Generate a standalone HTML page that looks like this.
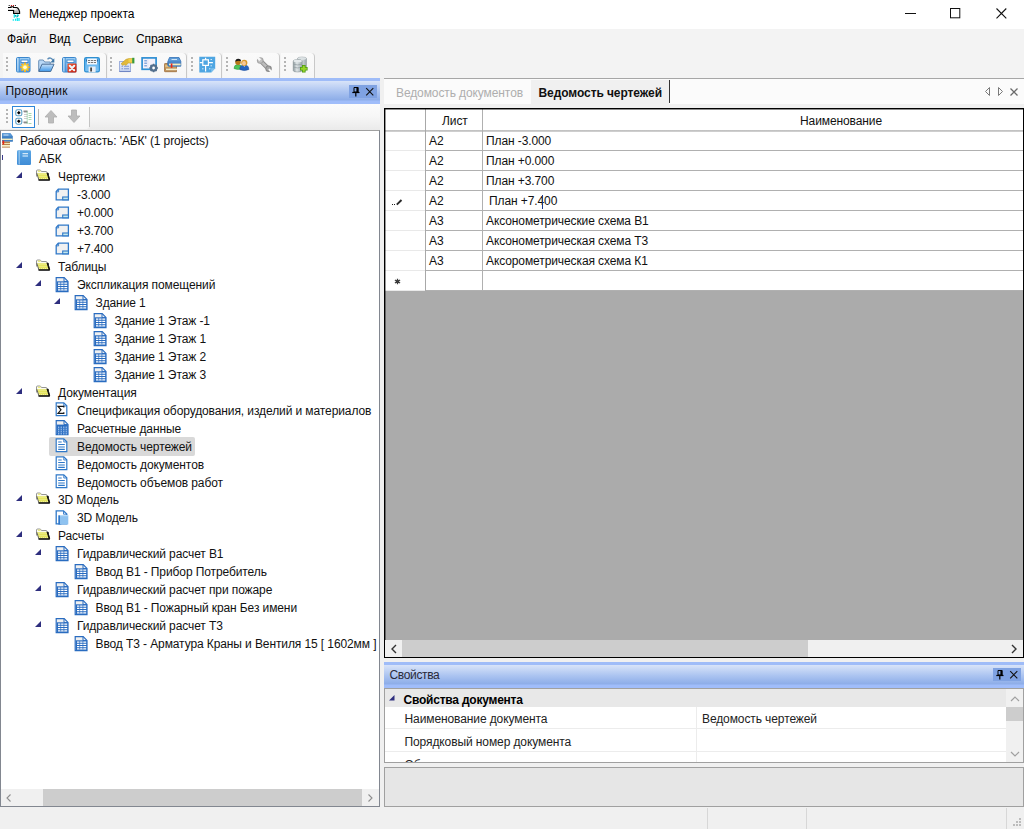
<!DOCTYPE html>
<html lang="ru">
<head>
<meta charset="utf-8">
<title>Менеджер проекта</title>
<style>
html,body{margin:0;padding:0;}
body{width:1024px;height:829px;position:relative;overflow:hidden;background:#f0f0f0;
 font-family:"Liberation Sans",sans-serif;font-size:12px;color:#000;letter-spacing:-0.1px;}
div,svg{position:absolute;box-sizing:border-box;}
.t{white-space:nowrap;line-height:18px;}
.tl{white-space:nowrap;line-height:18px;height:18px;color:#111;}
.sel{height:19px;background:#d9d9d9;border-radius:2px;}
#title{left:0;top:0;width:1024px;height:29px;background:#fff;}
#menubar{left:0;top:29px;width:1024px;height:22px;background:#f3f3f3;}
#toolbar{left:0;top:51px;width:1024px;height:27px;background:#f3f3f3;}
.hdr{background:linear-gradient(#9fbcf8 0,#9fbcf8 2.500px,#d6e2f8 3.500px,#a9c2f0 55%,#8dade8 22px,#a0bdfa 23px,#a0bdfa 100%);}
.grip{width:2px;height:14px;background:repeating-linear-gradient(#b4b4b4 0,#b4b4b4 2px,transparent 2px,transparent 4px);}
.strip{top:2px;height:25px;background:linear-gradient(#fafafa,#f6f6f6);border-right:1px solid #c8c8c8;border-radius:0 4px 0 0;}
.vsep{width:1px;background:#c4c4c4;}
.hl{height:1px;background:#a0a0a0;left:0;}
.vl{width:1px;background:#a0a0a0;top:0;}
.cell{white-space:nowrap;line-height:20px;height:20px;color:#111;}
</style>
</head>
<body>
<svg width="0" height="0" style="left:0;top:0;overflow:hidden">
<defs>
<linearGradient id="gbk2" x1="0" y1="0" x2="0" y2="1"><stop offset="0" stop-color="#5aa6e4"/><stop offset="1" stop-color="#3f8cd6"/></linearGradient>
<g id="i-ws"><path d="M1 1.200h8.500l2.300 3v5.300h-10.800z" fill="#3f80c4"/><path d="M1.200 1.500h8l2 2.800h-10z" fill="#5a9ad8"/><rect x="2.500" y="2.500" width="5" height="1" fill="#cfe2f4"/><rect x="1" y="6.600" width="10.500" height="1.500" fill="#f4eec0"/><rect x="1" y="8.200" width="10.800" height="1.300" fill="#3f80c4"/>
<rect x="1" y="9.600" width="8" height="6" fill="#b8824a"/><rect x="1" y="11" width="8" height="1" fill="#f0e2b0"/><rect x="1" y="13" width="8" height="1.700" fill="#f6f0cc"/><rect x="1.500" y="8.500" width="1.700" height="4" fill="#e8261c"/></g>
<g id="i-book"><rect x="0" y=".3" width="14" height="14.700" rx="1.200" fill="url(#gbk2)"/><path d="M2.200 .8v13.800" stroke="#cfe6f8" stroke-width=".7"/><rect x="5.500" y="3.200" width="5.500" height="1" fill="#f4fafe"/><rect x="5.500" y="5" width="5.500" height="2" fill="#9ccaf0"/></g>
<g id="i-folder"><path d="M1.500 9.500v-5.500q0-1 1-1h2.300q.8 0 1.200.8l.5.700h4.500q.8 0 .8.800v1.200" fill="#fbfbee" stroke="#8a8a8a" stroke-width=".9"/><path d="M3 4.200h2.500" stroke="#e6e66a" stroke-width="1.200"/><path d="M2 6.300h10.500l2 6.200h-10.800z" fill="#e4e45e"/><path d="M2.500 7.500h9M3.500 9.500h9M4 11.500h9" stroke="#f4f4b0" stroke-width=".8" stroke-dasharray="1 1"/><path d="M1.800 6.300l2 6.400" stroke="#555" stroke-width=".9" fill="none"/><path d="M3.500 13h11.300M12.300 5.800l2.200 7" stroke="#000" stroke-width="1.500" fill="none"/><path d="M12.200 6l1.400 0 .9 6.500z" fill="#222"/></g>
<g id="i-sheet"><path d="M3.300 1.200h10.100v10.600h-12.200v-8.200z" fill="#f1f1f1" stroke="#2f78c8" stroke-width="1.300"/><path d="M3.600 1.500v2.400h-2.300" fill="none" stroke="#2f78c8" stroke-width=".9"/><rect x="7.700" y="9" width="5.700" height="2.800" fill="#c4e8ec" stroke="#2f78c8" stroke-width="1.100"/></g>
<g id="i-table"><path d="M1.200 .6h8l3.800 3.800v10.200h-11.800z" fill="#f0f0f0" stroke="#2a6cc0" stroke-width="1.200"/><path d="M9 .8v3.800h3.800" fill="none" stroke="#2a6cc0" stroke-width="1"/><rect x="1.800" y="4.300" width="11.200" height="10.300" fill="#2a6cc0"/><path d="M3 6h9.200M3 8.300h9.200M3 10.600h9.200M3 12.900h9.200" stroke="#fff" stroke-width="1.250"/><path d="M5.700 5v8.500M8.900 5v8.500" stroke="#2a6cc0" stroke-width=".7"/></g>
<g id="i-sigma"><path d="M1.200 .8h7.600l3 3v9.800h-10.600z" fill="#fff" stroke="#2f78c8" stroke-width="1.200"/><path d="M8.800 1v3h3" fill="none" stroke="#2f78c8" stroke-width=".9"/><path d="M8.800 5.500v-1.200h-5.800l3 3.500-3 3.600h5.800v-1.200" fill="none" stroke="#1a1a1a" stroke-width="1.200"/></g>
<g id="i-calc"><path d="M1.200 .6h8l3.800 3.800v10.200h-11.800z" fill="#f0f0f0" stroke="#2a6cc0" stroke-width="1.200"/><path d="M9 .8v3.800h3.800" fill="none" stroke="#2a6cc0" stroke-width="1"/><rect x="1.800" y="4.600" width="11" height="10" fill="#2a6cc0"/><path d="M3.700 6.500v8M6.200 6.500v8M8.800 6.500v8M11.200 6.500v8" stroke="#a4c6ee" stroke-width="1.100"/><path d="M2 8.500h10.500M2 10.500h10.500M2 12.500h10.500" stroke="#3a78c8" stroke-width=".7"/></g>
<g id="i-doc"><path d="M1.200 .8h7.600l3 3v9.800h-10.600z" fill="#fff" stroke="#2f78c8" stroke-width="1.200"/><path d="M8.800 1v3h3" fill="none" stroke="#2f78c8" stroke-width=".9"/><path d="M3.200 4h3.500M3.200 6.500h6.600M3.200 9h6.600M3.200 11.400h6.600" stroke="#2f78c8" stroke-width="1.200"/></g>
<g id="i-model"><path d="M1.200 .8h7.300l3.300 3.300v9.700h-10.600z" fill="#fff" stroke="#2f78c8" stroke-width="1.300"/><path d="M8.500 1v3.200h3.200" fill="none" stroke="#2f78c8" stroke-width=".9"/><rect x="3.300" y="5.300" width="3" height="9.300" fill="#2f78cc"/><rect x="5" y="5.600" width="8.300" height="8.800" fill="#8ec2f0"/><path d="M5 5.600h8.300" stroke="#b8daf6" stroke-width="1.200"/></g>
<g id="i-pin"><path d="M2 .5h4.200v4.500h-4.200z" fill="none" stroke="#000" stroke-width="1"/><path d="M5.200 .5v4.500" stroke="#000" stroke-width="1.600"/><path d="M.3 5.500h7.200" stroke="#000" stroke-width="1.200"/><path d="M3.800 6v3.500" stroke="#000" stroke-width="1.200"/></g>
</defs>
</svg>

<!-- title bar -->
<div id="title">
 <svg style="left:7px;top:4px" width="16" height="18" viewBox="7 4 16 18"><defs><linearGradient id="gtap" x1="0" y1="0" x2="0" y2="1"><stop offset="0" stop-color="#fff"/><stop offset="1" stop-color="#9a9a9a"/></linearGradient></defs>
 <path d="M8 7.500h3v-.8h2.500v.8h3.300q1.300 .5 2 2l.8 2v2h-6v-3h-5.600z" fill="url(#gtap)"/><path d="M8 7.500h3v-.8h2.500v.8h3.300q1.300 .5 2 2l.8 2v2h-6v-3h-5.600" fill="none" stroke="#000" stroke-width="1.100"/>
 <path d="M8.500 8.700h5.500l1.500 1" stroke="#fff" stroke-width="1.300" fill="none"/>
 <rect x="8.700" y="5" width="1" height="1" fill="#111"/><rect x="14.900" y="5" width="1" height="1" fill="#111"/><rect x="10.900" y="5" width="1.100" height="1.100" fill="#c01010"/><rect x="12.900" y="5" width="1.100" height="1.100" fill="#c01010"/>
 <path d="M14.300 14.200v3.500M17.800 14.200v2.500M16 15v1.500M19 18v3M13.300 19.200v1.600M15.500 18.800v2M17.300 18v3" stroke="#00e8f0" stroke-width="1.200"/>
 <path d="M15.200 15l1 2M18.300 15l-1.400 2.500" stroke="#0a9aa0" stroke-width=".9"/></svg>
 <div class="t" style="left:29px;top:5px;letter-spacing:0">Менеджер проекта</div>
 <svg style="left:904px;top:8px" width="14" height="12" viewBox="0 0 14 12"><path d="M1 5.500h11" stroke="#111" stroke-width="1"/></svg>
 <svg style="left:949px;top:7px" width="14" height="14" viewBox="0 0 14 14"><rect x="1.500" y="1.500" width="9.300" height="9.300" fill="none" stroke="#111" stroke-width="1"/></svg>
 <svg style="left:995px;top:6.600px" width="14" height="14" viewBox="0 0 14 14"><path d="M1.500 1.500l9.800 9.800M11.300 1.500l-9.800 9.800" stroke="#111" stroke-width="1.100"/></svg>
</div>

<!-- menu bar -->
<div id="menubar">
 <div class="t" style="left:7px;top:1px">Файл</div>
 <div class="t" style="left:49px;top:1px">Вид</div>
 <div class="t" style="left:83px;top:1px">Сервис</div>
 <div class="t" style="left:136px;top:1px">Справка</div>
</div>

<!-- toolbar -->
<div id="toolbar">
<div class="strip" style="left:3px;width:104px"></div>
<div class="strip" style="left:108px;width:79px"></div>
<div class="strip" style="left:188px;width:34px"></div>
<div class="strip" style="left:223px;width:57px"></div>
<div class="strip" style="left:281px;width:34px"></div>
<div class="grip" style="left:6px;top:6px"></div>
<div class="grip" style="left:110px;top:6px"></div>
<div class="grip" style="left:191px;top:6px"></div>
<div class="grip" style="left:226px;top:6px"></div>
<div class="grip" style="left:284px;top:6px"></div>
<!-- 1 new project -->
<svg style="left:16px;top:5px" width="16" height="17" viewBox="0 0 16 17">
 <defs><linearGradient id="gbk" x1="0" y1="0" x2="0" y2="1"><stop offset="0" stop-color="#9fd0f6"/><stop offset="1" stop-color="#4f9de6"/></linearGradient>
 <radialGradient id="gst"><stop offset="0" stop-color="#fffbd0"/><stop offset=".45" stop-color="#ffe23a"/><stop offset="1" stop-color="#f59a10"/></radialGradient></defs>
 <rect x=".5" y="1.500" width="13.500" height="14.500" rx="1.200" fill="url(#gbk)" stroke="#3a86cc"/>
 <path d="M2 2v13.500" stroke="#d8ecfb" stroke-width="1"/><path d="M3.200 2v13.500" stroke="#3a86cc" stroke-width=".8"/>
 <rect x="5" y="4" width="7" height="2.600" fill="#fff" stroke="#3a86cc" stroke-width=".9"/>
 <path d="M9 6.500v9.600M4.200 11.300h9.600M5.600 7.900l6.800 6.800M12.400 7.900l-6.800 6.800" stroke="url(#gst)" stroke-width="1.900"/>
 <circle cx="9" cy="11.300" r="1.700" fill="#fffbe0"/>
</svg>
<!-- 2 open -->
<svg style="left:38px;top:5px" width="17" height="17" viewBox="0 0 17 17">
 <defs><linearGradient id="gfo" x1="0" y1="0" x2="0" y2="1"><stop offset="0" stop-color="#c8e2fa"/><stop offset="1" stop-color="#3f97e8"/></linearGradient></defs>
 <path d="M.7 15.200v-10.200q0-1 1-1h3.500l1.500 2h5.500v2" fill="#b9d8f6" stroke="#6a8fb5" stroke-width="1"/>
 <path d="M.8 15.500l3.200-7.300h12l-3.300 7.300z" fill="url(#gfo)" stroke="#4a6f98" stroke-width="1"/>
 <path d="M9.500 3.200q3.200-2.800 5.500 1.200" fill="none" stroke="#5d8db8" stroke-width="1.400"/><path d="M16.300 2.200v4.200h-4z" fill="#3f78a8"/>
</svg>
<!-- 3 delete project -->
<svg style="left:62px;top:5px" width="16" height="17" viewBox="0 0 16 17">
 <defs><linearGradient id="grd" x1="0" y1="0" x2="1" y2="1"><stop offset="0" stop-color="#f2603a"/><stop offset="1" stop-color="#c0180c"/></linearGradient></defs>
 <rect x=".5" y="1.500" width="13.500" height="14.500" rx="1.200" fill="url(#gbk)" stroke="#3a86cc"/>
 <path d="M2 2v13.500" stroke="#d8ecfb" stroke-width="1"/><path d="M3.200 2v13.500" stroke="#3a86cc" stroke-width=".8"/>
 <rect x="5" y="4" width="7" height="2.600" fill="#fff" stroke="#3a86cc" stroke-width=".9"/>
 <rect x="5.500" y="7.500" width="9" height="9" rx="1" fill="url(#grd)"/>
 <path d="M7.800 9.800l4.400 4.400M12.200 9.800l-4.400 4.400" stroke="#eef6fa" stroke-width="2.100" stroke-linecap="round"/>
</svg>
<!-- 4 save -->
<svg style="left:84px;top:5px" width="17" height="17" viewBox="0 0 17 17">
 <defs><linearGradient id="gsv" x1="0" y1="0" x2="0" y2="1"><stop offset="0" stop-color="#5ab0ee"/><stop offset="1" stop-color="#7cc2f4"/></linearGradient></defs>
 <rect x=".6" y="1.600" width="14.800" height="14.300" rx="1.600" fill="url(#gsv)" stroke="#2f8fd0" stroke-width="1.200"/>
 <rect x="3" y="2.600" width="10" height="6" rx=".6" fill="#f4f8fc"/>
 <path d="M4 4.500h8M4 6.500h8" stroke="#6a6a6a" stroke-width=".9" stroke-dasharray="2.200 .7"/>
 <path d="M2.600 3.500v2M13.400 3.500v2" stroke="#1f5f9a" stroke-width=".9"/>
 <rect x="4.600" y="10.500" width="7" height="5.800" fill="#e9eef4"/><rect x="6.300" y="11.500" width="1.600" height="4" fill="#333"/>
</svg>
<!-- 5 properties (hand) -->
<svg style="left:118px;top:5px" width="18" height="17" viewBox="0 0 18 17">
 <defs><linearGradient id="gpd" x1="0" y1="0" x2="0" y2="1"><stop offset="0" stop-color="#eef2fb"/><stop offset="1" stop-color="#c4d2f0"/></linearGradient></defs>
 <rect x="1.500" y="5.500" width="11" height="10" fill="url(#gpd)" stroke="#9fb0dc" stroke-width="1"/>
 <path d="M1.500 15.500h11" stroke="#6f86c4" stroke-width="1.100"/>
 <path d="M3.500 10.200h1.500M6 10.200h5M3.500 12.700h1.500M6 12.700h5" stroke="#7f98d4" stroke-width="1.100"/>
 <path d="M3 7.800l5-4.500 3-.8h3.300v4.600h-4l-2.500 2.300-1.500-1-1.500 1z" fill="#e2b93a" stroke="#b8962a" stroke-width=".5"/>
 <path d="M10.500 2.600h3.800v3.800h-3.800z" fill="#f0cf4c"/>
 <rect x="14.200" y="1.800" width="2.200" height="5.600" fill="#3a9a3a"/>
</svg>
<!-- 6 window gear -->
<svg style="left:141px;top:5px" width="17" height="17" viewBox="0 0 17 17">
 <rect x="1.100" y="1.900" width="14" height="11.400" fill="#f4f2fb" stroke="#2f8fd4" stroke-width="1.700"/>
 <path d="M3.300 4.800h2.600M3.300 7.300h2.600M3.300 9.800h2.600" stroke="#86a8dc" stroke-width="1.400"/>
 <path d="M6.800 3v9" stroke="#dcdff2" stroke-width=".8"/>
 <g transform="translate(12.600 12)"><circle r="2.800" fill="none" stroke="#54708e" stroke-width="2"/><path d="M0-4.300v8.600M-4.300 0h8.600M-3-3l6 6M3-3l-6 6" stroke="#54708e" stroke-width="1.400"/><circle r="1.400" fill="#fff"/></g>
</svg>
<!-- 7 books -->
<svg style="left:164px;top:5px" width="18" height="17" viewBox="0 0 18 17">
 <path d="M1.200 7.500q-.8 0-.8.800v6.600q0 .8.800.8h11.300v-1.500h-10.500v-1.700h10.500v-5z" fill="#c89a5a" stroke="#9a6a3a" stroke-width=".8"/>
 <rect x="2" y="12.500" width="10.500" height="1.700" fill="#f6efc8"/>
 <rect x="1.200" y="9.500" width="11" height="1" fill="#f0e2b0"/>
 <path d="M5.500 1.500h9.500l1.800 4v4.700h-11.800q-1.200 0-1.200-1.200v-3.200z" fill="#4a86c8" stroke="#2f6cb0" stroke-width=".8"/>
 <path d="M5.800 1.800h9l1.500 3.500h-12z" fill="#5c9ad6"/>
 <rect x="5" y="7.600" width="11.600" height="1.700" fill="#f4eebc"/>
 <rect x="7.500" y="3" width="5.500" height=".9" fill="#dcebf8"/>
 <rect x="6.800" y="7.500" width="1.600" height="4.300" fill="#e8261c"/>
</svg>
<!-- 8 blueprint -->
<svg style="left:199px;top:5px" width="17" height="17" viewBox="0 0 17 17">
 <path d="M.3.800h15.900v11.500l-4 4.200h-11.900z" fill="#4fa6e2"/>
 <path d="M12.200 16.500v-4.200h4z" fill="#7fc0ec"/>
 <rect x="3.800" y="3.800" width="5.600" height="5.600" fill="none" stroke="#fff" stroke-width="1.200"/>
 <path d="M6.600 1.800v2M6.600 9.400v6M.8 6.600h3M9.400 6.600h4.500" stroke="#fff" stroke-width="1.200"/>
 <path d="M11.500 3.500h1.500M11.500 9.800h1.500M3 12.800h1.500M10 12.800h1.500" stroke="#cfe8f8" stroke-width="1"/>
</svg>
<!-- 9 users -->
<svg style="left:233px;top:5px" width="17" height="17" viewBox="0 0 17 17">
 <path d="M1 12.500q0-4 4-4t4 4q-4 1.800-8 0z" fill="#4fc45a" stroke="#2f9a3f" stroke-width=".6"/>
 <circle cx="5" cy="6.300" r="2.700" fill="#b87818"/><path d="M2.200 5.800q.3-3 3-3t2.800 2.400q-2.800-1-5.800.6z" fill="#1a1a1a"/>
 <path d="M6.800 13.500q0-4.600 4.500-4.600t4.500 4.600q-4.500 2-9 0z" fill="#2464c0" stroke="#184a98" stroke-width=".6"/>
 <path d="M10.500 9.500l.8 1.500.8-1.500z" fill="#fff"/>
 <circle cx="11.300" cy="6.800" r="3.100" fill="#d89a2a"/><ellipse cx="11" cy="7.300" rx="1.900" ry="2.200" fill="#f6c89a"/>
</svg>
<!-- 10 wrench -->
<svg style="left:256px;top:5px" width="17" height="17" viewBox="0 0 17 17">
 <path d="M4.500 4.800l7.800 7.800" stroke="#8e8e8e" stroke-width="4.400" stroke-linecap="round"/>
 <path d="M4.500 4.800l7.800 7.800" stroke="#bdbdbd" stroke-width="2.400" stroke-linecap="round"/>
 <circle cx="4.200" cy="4.500" r="3.300" fill="#a6a6a6"/><circle cx="4.200" cy="4.500" r="2.200" fill="#c2c2c2"/><path d="M.8 .8l3.400 3.400" stroke="#f8f8f8" stroke-width="2.400"/>
 <circle cx="12.600" cy="12.800" r="3.200" fill="#8c8c8c"/><circle cx="12.400" cy="12.600" r="2" fill="#a8a8a8"/><path d="M16.200 16.400l-3.300-3.300" stroke="#f8f8f8" stroke-width="2"/>
</svg>
<!-- 11 db add -->
<svg style="left:292px;top:5px" width="18" height="18" viewBox="0 0 18 18">
 <defs><linearGradient id="gdb" x1="0" y1="0" x2="1" y2="0"><stop offset="0" stop-color="#8c989c"/><stop offset=".4" stop-color="#dfe5e7"/><stop offset="1" stop-color="#9aa6aa"/></linearGradient></defs>
 <path d="M5.500 2.500q0-1.500 4.500-1.500t4.500 1.500v9.500q0 1.500-4.500 1.500t-4.500-1.500z" fill="url(#gdb)" stroke="#8a9498" stroke-width=".5"/>
 <ellipse cx="10" cy="2.500" rx="4.300" ry="1.300" fill="#dce2e4"/>
 <path d="M1.200 5q0-1.500 4.500-1.500t4.500 1.500v9.500q0 1.500-4.500 1.500t-4.500-1.500z" fill="url(#gdb)" stroke="#808c90" stroke-width=".5"/>
 <ellipse cx="5.700" cy="5" rx="4.300" ry="1.300" fill="#e4e9eb"/>
 <path d="M1.400 8.200q4.300 1.500 8.600 0M1.400 11.200q4.300 1.500 8.600 0" fill="none" stroke="#8e9a9e" stroke-width=".7"/>
 <path d="M11.800 9v7.600M8 12.800h7.600" stroke="#4a9a12" stroke-width="3.600"/>
 <path d="M11.800 9.800v6M8.800 12.800h6" stroke="#9ad42a" stroke-width="2"/>
</svg>

</div>

<!-- left panel -->
<div class="hdr" style="left:0;top:78px;width:380px;height:26px;"></div>
<div class="t" style="left:5.500px;top:82px;color:#111;letter-spacing:.22px">Проводник</div>
<div style="left:349px;top:85px;width:28px;height:13px;background:#7fa2e2;"></div>
<svg style="left:352px;top:87px" width="8" height="10" viewBox="0 0 8 10"><use href="#i-pin"/></svg>
<svg style="left:365px;top:87px" width="10" height="10" viewBox="0 0 10 10"><path d="M1.200 1.200l7.100 7.100M8.300 1.200l-7.100 7.100" stroke="#111" stroke-width="1.100"/></svg>

<div style="left:0;top:104px;width:380px;height:26px;background:linear-gradient(#fcfcfc,#f6f6f6 50%,#eaeaea);"></div><div style="left:0;top:104px;width:89px;height:25px;background:linear-gradient(#fdfdfd,#f7f7f7);border-radius:0 0 3px 0"></div><div style="left:89px;top:107px;width:1px;height:20px;background:#c4c4c4"></div>
<div class="grip" style="left:6px;top:109px;height:16px"></div>
<div style="left:12px;top:106px;width:23px;height:22px;background:#fff;border:1px solid #2e86d8;"></div>
<svg style="left:15px;top:109px" width="18" height="17" viewBox="0 0 18 17">
 <rect x=".8" y=".8" width="6" height="6" rx="1.600" fill="#fff" stroke="#5aa0c8" stroke-width="1.100"/>
 <rect x=".8" y="9.200" width="6" height="6" rx="1.600" fill="#fff" stroke="#5aa0c8" stroke-width="1.100"/>
 <path d="M3.800 2.300v3M2.300 3.800h3M3.800 10.700v3M2.300 12.200h3" stroke="#000" stroke-width="1.500"/>
 <rect x="8.500" y="1.500" width="4" height="1.600" fill="#8a8a8a"/>
 <rect x="8.500" y="12.500" width="4" height="1.600" fill="#8a8a8a"/>
 <path d="M9 3.500h3.500M9 5.500h3.500M9 7.500h3.500M9 9.500h3.500M9 14.500h3.500" stroke="#cfcfcf" stroke-width="1"/>
 <path d="M13.500 4.500h3M13.500 6.500h3M13.500 8.500h3M13.500 10.500h3M13.500 14.500h3" stroke="#a8d8b0" stroke-width="1"/>
 <path d="M12.200 2v13" stroke="#6ac080" stroke-width=".5"/>
</svg>

<div class="vsep" style="left:38px;top:109px;height:16px;background:#b8b8b8"></div>
<svg style="left:43px;top:108.500px" width="16" height="16" viewBox="0 0 16 16"><path d="M8 1.500l6 6.500h-3.500v6h-5v-6h-3.500z" fill="#bdbdbd" stroke="#adadad" stroke-width=".8"/></svg>
<svg style="left:66px;top:108px" width="16" height="16" viewBox="0 0 16 16"><path d="M8 14.500l6-6.500h-3.500v-6h-5v6h-3.500z" fill="#bdbdbd" stroke="#adadad" stroke-width=".8"/></svg>


<div style="left:0;top:130px;width:380px;height:677px;background:#fff;border:1px solid #828790;border-top-color:#a0a0a0;"></div>
<div style="left:0;top:131px;width:2px;height:674px;background:#555;opacity:.0"></div>
<div style="left:2px;top:155px;width:1px;height:5px;background:#3a3a8a"></div>
<svg class="ic" style="left:1px;top:132px" width="16" height="16" viewBox="0 0 16 16"><use href="#i-ws"/></svg>
<div class="tl" style="left:20px;top:132px">Рабочая область: 'АБК' (1 projects)</div>
<svg class="ic" style="left:17px;top:150.3px" width="16" height="16" viewBox="0 0 16 16"><use href="#i-book"/></svg>
<div class="tl" style="left:39px;top:150px">АБК</div>
<svg class="exp" style="left:15.5px;top:172px" width="6" height="6" viewBox="0 0 6 6"><path d="M6 0V6H0Z" fill="#2e2e7e"/></svg>
<svg class="ic" style="left:34.8px;top:167.2px" width="16" height="16" viewBox="0 0 16 16"><use href="#i-folder"/></svg>
<div class="tl" style="left:58px;top:168px">Чертежи</div>
<svg class="ic" style="left:54.5px;top:188px" width="16" height="16" viewBox="0 0 16 16"><use href="#i-sheet"/></svg>
<div class="tl" style="left:77px;top:186px">-3.000</div>
<svg class="ic" style="left:54.5px;top:206px" width="16" height="16" viewBox="0 0 16 16"><use href="#i-sheet"/></svg>
<div class="tl" style="left:77px;top:204px">+0.000</div>
<svg class="ic" style="left:54.5px;top:224px" width="16" height="16" viewBox="0 0 16 16"><use href="#i-sheet"/></svg>
<div class="tl" style="left:77px;top:222px">+3.700</div>
<svg class="ic" style="left:54.5px;top:242px" width="16" height="16" viewBox="0 0 16 16"><use href="#i-sheet"/></svg>
<div class="tl" style="left:77px;top:240px">+7.400</div>
<svg class="exp" style="left:15.5px;top:262px" width="6" height="6" viewBox="0 0 6 6"><path d="M6 0V6H0Z" fill="#2e2e7e"/></svg>
<svg class="ic" style="left:34.8px;top:257.2px" width="16" height="16" viewBox="0 0 16 16"><use href="#i-folder"/></svg>
<div class="tl" style="left:58px;top:258px">Таблицы</div>
<svg class="exp" style="left:35px;top:280px" width="6" height="6" viewBox="0 0 6 6"><path d="M6 0V6H0Z" fill="#2e2e7e"/></svg>
<svg class="ic" style="left:55px;top:277px" width="16" height="16" viewBox="0 0 16 16"><use href="#i-table"/></svg>
<div class="tl" style="left:77px;top:276px">Экспликация помещений</div>
<svg class="exp" style="left:54px;top:298px" width="6" height="6" viewBox="0 0 6 6"><path d="M6 0V6H0Z" fill="#2e2e7e"/></svg>
<svg class="ic" style="left:74px;top:295px" width="16" height="16" viewBox="0 0 16 16"><use href="#i-table"/></svg>
<div class="tl" style="left:95.5px;top:294px">Здание 1</div>
<svg class="ic" style="left:93px;top:313px" width="16" height="16" viewBox="0 0 16 16"><use href="#i-table"/></svg>
<div class="tl" style="left:114.5px;top:312px">Здание 1 Этаж -1</div>
<svg class="ic" style="left:93px;top:331px" width="16" height="16" viewBox="0 0 16 16"><use href="#i-table"/></svg>
<div class="tl" style="left:114.5px;top:330px">Здание 1 Этаж 1</div>
<svg class="ic" style="left:93px;top:349px" width="16" height="16" viewBox="0 0 16 16"><use href="#i-table"/></svg>
<div class="tl" style="left:114.5px;top:348px">Здание 1 Этаж 2</div>
<svg class="ic" style="left:93px;top:367px" width="16" height="16" viewBox="0 0 16 16"><use href="#i-table"/></svg>
<div class="tl" style="left:114.5px;top:366px">Здание 1 Этаж 3</div>
<svg class="exp" style="left:15.5px;top:388px" width="6" height="6" viewBox="0 0 6 6"><path d="M6 0V6H0Z" fill="#2e2e7e"/></svg>
<svg class="ic" style="left:34.8px;top:383.2px" width="16" height="16" viewBox="0 0 16 16"><use href="#i-folder"/></svg>
<div class="tl" style="left:58px;top:384px">Документация</div>
<svg class="ic" style="left:55px;top:402.4px" width="16" height="16" viewBox="0 0 16 16"><use href="#i-sigma"/></svg>
<div class="tl" style="left:77px;top:402px">Спецификация оборудования, изделий и материалов</div>
<svg class="ic" style="left:55px;top:420.3px" width="16" height="16" viewBox="0 0 16 16"><use href="#i-calc"/></svg>
<div class="tl" style="left:77px;top:420px">Расчетные данные</div>
<div class="sel" style="left:49px;top:437px;width:146px"></div>
<svg class="ic" style="left:55px;top:438.1px" width="16" height="16" viewBox="0 0 16 16"><use href="#i-doc"/></svg>
<div class="tl" style="left:77px;top:438px">Ведомость чертежей</div>
<svg class="ic" style="left:55px;top:456.1px" width="16" height="16" viewBox="0 0 16 16"><use href="#i-doc"/></svg>
<div class="tl" style="left:77px;top:456px">Ведомость документов</div>
<svg class="ic" style="left:55px;top:474.1px" width="16" height="16" viewBox="0 0 16 16"><use href="#i-doc"/></svg>
<div class="tl" style="left:77px;top:474px">Ведомость объемов работ</div>
<svg class="exp" style="left:15.5px;top:495px" width="6" height="6" viewBox="0 0 6 6"><path d="M6 0V6H0Z" fill="#2e2e7e"/></svg>
<svg class="ic" style="left:34.8px;top:490.2px" width="16" height="16" viewBox="0 0 16 16"><use href="#i-folder"/></svg>
<div class="tl" style="left:58px;top:491px">3D Модель</div>
<svg class="ic" style="left:55px;top:509.8px" width="16" height="16" viewBox="0 0 16 16"><use href="#i-model"/></svg>
<div class="tl" style="left:77px;top:509px">3D Модель</div>
<svg class="exp" style="left:15.5px;top:531px" width="6" height="6" viewBox="0 0 6 6"><path d="M6 0V6H0Z" fill="#2e2e7e"/></svg>
<svg class="ic" style="left:34.8px;top:526.2px" width="16" height="16" viewBox="0 0 16 16"><use href="#i-folder"/></svg>
<div class="tl" style="left:58px;top:527px">Расчеты</div>
<svg class="exp" style="left:35px;top:549px" width="6" height="6" viewBox="0 0 6 6"><path d="M6 0V6H0Z" fill="#2e2e7e"/></svg>
<svg class="ic" style="left:55px;top:546px" width="16" height="16" viewBox="0 0 16 16"><use href="#i-table"/></svg>
<div class="tl" style="left:77px;top:545px">Гидравлический расчет В1</div>
<svg class="ic" style="left:74px;top:564px" width="16" height="16" viewBox="0 0 16 16"><use href="#i-table"/></svg>
<div class="tl" style="left:95.5px;top:563px">Ввод В1 - Прибор Потребитель</div>
<svg class="exp" style="left:35px;top:585px" width="6" height="6" viewBox="0 0 6 6"><path d="M6 0V6H0Z" fill="#2e2e7e"/></svg>
<svg class="ic" style="left:55px;top:582px" width="16" height="16" viewBox="0 0 16 16"><use href="#i-table"/></svg>
<div class="tl" style="left:77px;top:581px">Гидравлический расчет при пожаре</div>
<svg class="ic" style="left:74px;top:600px" width="16" height="16" viewBox="0 0 16 16"><use href="#i-table"/></svg>
<div class="tl" style="left:95.5px;top:599px">Ввод В1 - Пожарный кран Без имени</div>
<svg class="exp" style="left:35px;top:621px" width="6" height="6" viewBox="0 0 6 6"><path d="M6 0V6H0Z" fill="#2e2e7e"/></svg>
<svg class="ic" style="left:55px;top:618px" width="16" height="16" viewBox="0 0 16 16"><use href="#i-table"/></svg>
<div class="tl" style="left:77px;top:617px">Гидравлический расчет Т3</div>
<svg class="ic" style="left:74px;top:636px" width="16" height="16" viewBox="0 0 16 16"><use href="#i-table"/></svg>
<div class="tl" style="left:95.5px;top:635px">Ввод Т3 - Арматура Краны и Вентиля 15 [ 1602мм ]</div>
<!-- left hscroll -->
<div style="left:1px;top:789px;width:378px;height:17px;background:#f0f0f0;"></div>
<div style="left:43px;top:789px;width:319px;height:17px;background:#cdcdcd;"></div>
<svg style="left:5px;top:793px" width="8" height="10" viewBox="0 0 8 10"><path d="M5.500 1.500l-3.500 3.500 3.500 3.500" fill="none" stroke="#8e8e8e" stroke-width="1.100"/></svg>
<svg style="left:366px;top:793px" width="8" height="10" viewBox="0 0 8 10"><path d="M2.500 1.500l3.500 3.500-3.500 3.500" fill="none" stroke="#8e8e8e" stroke-width="1.100"/></svg>

<!-- right: tab strip -->
<div style="left:384px;top:78px;width:640px;height:1px;background:#a6a6a6;"></div>
<div style="left:384px;top:79px;width:640px;height:25px;background:#fbfbfb;"></div>
<div style="left:384px;top:104px;width:640px;height:4px;background:#f0f0f0;"></div>
<div style="left:531px;top:80px;width:138px;height:25px;background:#f0f0f0;"></div>
<div style="left:669px;top:80px;width:1px;height:23px;background:#333;"></div>
<div class="t" style="left:396px;top:84px;color:#aeaeae">Ведомость документов</div>
<div class="t" style="left:538.5px;top:84px;font-weight:bold;color:#111;letter-spacing:-0.08px">Ведомость чертежей</div>
<svg style="left:984px;top:86px" width="8" height="11" viewBox="0 0 8 11"><path d="M5.500 1.500v8l-4-4z" fill="none" stroke="#7a7a7a" stroke-width="1"/></svg>
<svg style="left:996px;top:86px" width="8" height="11" viewBox="0 0 8 11"><path d="M2.500 1.500v8l4-4z" fill="none" stroke="#7a7a7a" stroke-width="1"/></svg>
<svg style="left:1009px;top:87px" width="10" height="10" viewBox="0 0 10 10"><path d="M1.500 1.500l7 7M8.500 1.500l-7 7" stroke="#6a6a6a" stroke-width="1.300"/></svg>

<!-- grid -->
<div id="grid" style="left:384px;top:108px;width:640px;height:550px;background:#ababab;border:1px solid #000;overflow:hidden">
 <div style="left:0;top:0;width:638px;height:181px;background:#fff;"></div>
 <div class="hl" style="top:21px;width:638px;height:2px;background:linear-gradient(#bdbdbd,#d4d4d4)"></div>
 <div class="hl" style="top:41px;width:40px;background:#e9e9e9"></div><div class="hl" style="top:41px;left:40px;width:598px;background:#b0b0b0"></div>
 <div class="hl" style="top:61px;width:40px;background:#e9e9e9"></div><div class="hl" style="top:61px;left:40px;width:598px;background:#b0b0b0"></div>
 <div class="hl" style="top:81px;width:40px;background:#e9e9e9"></div><div class="hl" style="top:81px;left:40px;width:598px;background:#b0b0b0"></div>
 <div class="hl" style="top:101px;width:40px;background:#e9e9e9"></div><div class="hl" style="top:101px;left:40px;width:598px;background:#b0b0b0"></div>
 <div class="hl" style="top:121px;width:40px;background:#e9e9e9"></div><div class="hl" style="top:121px;left:40px;width:598px;background:#b0b0b0"></div>
 <div class="hl" style="top:141px;width:40px;background:#e9e9e9"></div><div class="hl" style="top:141px;left:40px;width:598px;background:#b0b0b0"></div>
 <div class="hl" style="top:161px;width:40px;background:#e9e9e9"></div><div class="hl" style="top:161px;left:40px;width:598px;background:#b0b0b0"></div>
 <div class="hl" style="top:181px;width:40px;background:#e9e9e9"></div><div class="hl" style="top:181px;left:40px;width:598px;background:#b0b0b0"></div>
 <div class="vl" style="left:40px;height:182px;background:#a8a8a8"></div>
 <div class="vl" style="left:97px;height:182px;background:#b0b0b0"></div>
 <div class="cell" style="left:57px;top:2px">Лист</div>
 <div class="cell" style="left:415px;top:2px">Наименование</div>
 <div class="cell" style="left:44px;top:22px">A2</div><div class="cell" style="left:101px;top:22px">План -3.000</div>
 <div class="cell" style="left:44px;top:42px">A2</div><div class="cell" style="left:101px;top:42px">План +0.000</div>
 <div class="cell" style="left:44px;top:62px">A2</div><div class="cell" style="left:101px;top:62px">План +3.700</div>
 <div class="cell" style="left:44px;top:82px">A2</div><div class="cell" style="left:104px;top:82px">План +7.400</div>
 <div style="left:157px;top:86px;width:1px;height:14px;background:#1a3a8a"></div>
 <div class="cell" style="left:44px;top:102px">A3</div><div class="cell" style="left:101px;top:102px">Аксонометрические схема В1</div>
 <div class="cell" style="left:44px;top:122px">A3</div><div class="cell" style="left:101px;top:122px">Аксонометрическая схема Т3</div>
 <div class="cell" style="left:44px;top:142px">A3</div><div class="cell" style="left:101px;top:142px">Аксорометрическая схема К1</div>
 <svg style="left:6px;top:88px" width="12" height="9" viewBox="0 0 12 9"><rect x="1" y="7" width="1" height="1" fill="#222"/><rect x="3" y="7" width="1" height="1" fill="#222"/><path d="M5.800 7.700l4.700-4.700" stroke="#2a2a2a" stroke-width="1.900"/></svg>
 <svg style="left:9px;top:169px" width="7" height="7" viewBox="0 0 7 7"><circle cx="3.500" cy="3.500" r="1.700" fill="#3a3a3a"/><path d="M3.500 .7v5.600M.9 2l5.200 3M6.100 2l-5.200 3" stroke="#3a3a3a" stroke-width="1.300"/></svg>
 <div style="left:0;top:0;width:1px;height:548px;background:rgba(0,0,0,.4)"></div><div style="left:0;top:0;width:638px;height:1px;background:rgba(0,0,0,.45)"></div>
 <!-- hscroll -->
 <div style="left:0;top:531px;width:638px;height:17px;background:#f0f0f0;"></div>
 <div style="left:17px;top:531px;width:406px;height:17px;background:#cdcdcd;"></div>
 <svg style="left:5px;top:535px" width="8" height="10" viewBox="0 0 8 10"><path d="M6 1l-4 4 4 4" fill="none" stroke="#333" stroke-width="1.400"/></svg>
 <svg style="left:625px;top:535px" width="8" height="10" viewBox="0 0 8 10"><path d="M2 1l4 4-4 4" fill="none" stroke="#333" stroke-width="1.400"/></svg>
</div>

<!-- properties panel -->
<div class="hdr" style="left:384px;top:662px;width:640px;height:26px;"></div>
<div class="t" style="left:389.500px;top:666px;color:#2a2a3a;letter-spacing:-.35px">Свойства</div>
<div style="left:993px;top:668px;width:28px;height:13px;background:#7fa2e2;"></div>
<svg style="left:996px;top:670px" width="8" height="10" viewBox="0 0 8 10"><use href="#i-pin"/></svg>
<svg style="left:1009px;top:670px" width="10" height="10" viewBox="0 0 10 10"><path d="M1.200 1.200l7.100 7.100M8.300 1.200l-7.100 7.100" stroke="#111" stroke-width="1.100"/></svg>

<div style="left:384px;top:688px;width:640px;height:75px;background:#fff;border:1px solid #a0a0a0;overflow:hidden" id="props">
 <div style="left:0;top:0;width:622px;height:18px;background:#e8e8e8"></div>
 <svg style="left:4px;top:6px" width="6" height="6" viewBox="0 0 6 6"><path d="M5.500 0v5.500h-5.500z" fill="#2e2e7e"/></svg>
 <div class="t" style="left:18.500px;top:1.500px;font-weight:bold;letter-spacing:-0.22px">Свойства документа</div>
 <div class="t" style="left:19.500px;top:20.500px;color:#222">Наименование документа</div>
 <div class="t" style="left:317px;top:20.500px;color:#222">Ведомость чертежей</div>
 <div class="t" style="left:19.500px;top:43.500px;color:#222">Порядковый номер документа</div>
 <div class="t" style="left:19.500px;top:67px;color:#222">Обозначение</div>
 <div style="left:0;top:39px;width:622px;height:1px;background:#ececec"></div>
 <div style="left:0;top:62px;width:622px;height:1px;background:#ececec"></div>
 <div style="left:311px;top:18px;width:1px;height:60px;background:#ececec"></div>
 <div style="left:621px;top:0;width:17px;height:74px;background:#f0f0f0"></div>
 <div style="left:621px;top:18px;width:17px;height:14px;background:#cdcdcd"></div>
 <svg style="left:625px;top:6px" width="10" height="8" viewBox="0 0 10 8"><path d="M1 6l4-4 4 4" fill="none" stroke="#a0a0a0" stroke-width="1.200"/></svg>
 <svg style="left:625px;top:61px" width="10" height="8" viewBox="0 0 10 8"><path d="M1 2l4 4 4-4" fill="none" stroke="#a0a0a0" stroke-width="1.200"/></svg>
</div>
<div style="left:384px;top:767px;width:640px;height:40px;background:#e6e6e6;border:1px solid #a0a0a0;"></div>

<!-- status bar -->
<div style="left:0;top:807px;width:1024px;height:22px;background:#f0f0f0"></div>
<div style="left:707px;top:808px;width:1px;height:21px;background:#d7d7d7"></div>
<div style="left:806px;top:808px;width:1px;height:21px;background:#d7d7d7"></div>
<div style="left:1006px;top:808px;width:1px;height:21px;background:#d7d7d7"></div>
<svg style="left:1012px;top:817px" width="10" height="10" viewBox="0 0 10 10"><path d="M7 1h2v2h-2zM7 4h2v2h-2zM4 4h2v2h-2zM7 7h2v2h-2zM4 7h2v2h-2zM1 7h2v2h-2z" fill="#bcbcbc"/></svg>
</body>
</html>
